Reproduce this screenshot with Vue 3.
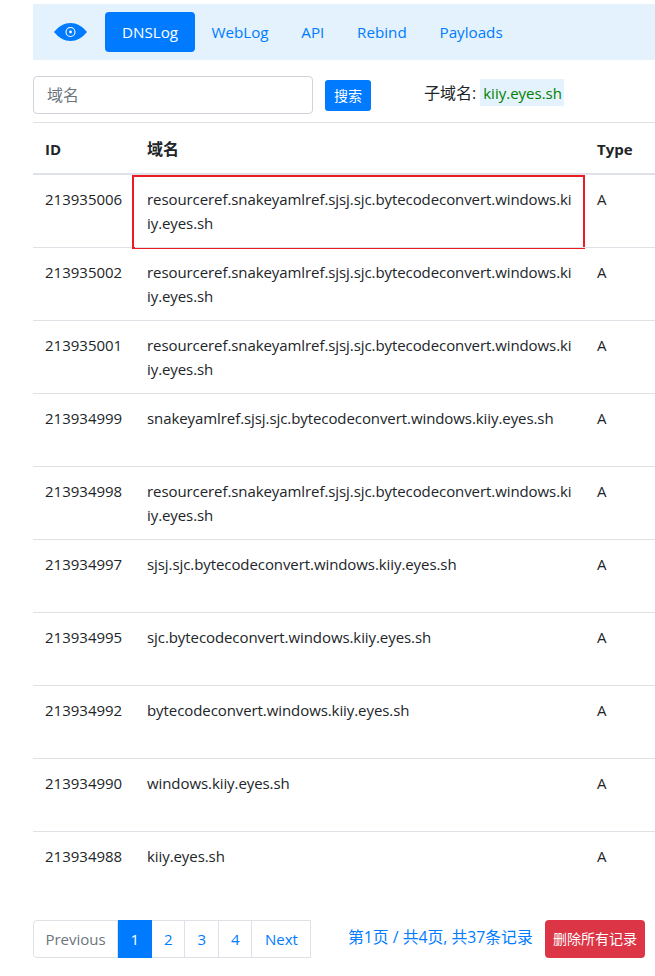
<script setup>
const navItems = ['WebLog', 'API', 'Rebind', 'Payloads']
const rows = [
  { id: 213935006, domain: 'resourceref.snakeyamlref.sjsj.sjc.bytecodeconvert.windows.kiiy.eyes.sh', marked: true },
  { id: 213935002, domain: 'resourceref.snakeyamlref.sjsj.sjc.bytecodeconvert.windows.kiiy.eyes.sh' },
  { id: 213935001, domain: 'resourceref.snakeyamlref.sjsj.sjc.bytecodeconvert.windows.kiiy.eyes.sh' },
  { id: 213934999, domain: 'snakeyamlref.sjsj.sjc.bytecodeconvert.windows.kiiy.eyes.sh' },
  { id: 213934998, domain: 'resourceref.snakeyamlref.sjsj.sjc.bytecodeconvert.windows.kiiy.eyes.sh' },
  { id: 213934997, domain: 'sjsj.sjc.bytecodeconvert.windows.kiiy.eyes.sh' },
  { id: 213934995, domain: 'sjc.bytecodeconvert.windows.kiiy.eyes.sh' },
  { id: 213934992, domain: 'bytecodeconvert.windows.kiiy.eyes.sh' },
  { id: 213934990, domain: 'windows.kiiy.eyes.sh' },
  { id: 213934988, domain: 'kiiy.eyes.sh' }
]
</script>

<template>
  <div class="page">
    <nav class="nav">
      <svg class="logo" viewBox="0 0 33 18" width="33" height="18" aria-hidden="true">
        <path fill="#007bff" d="M0 9C5 3 10.500 0 16.500 0S28 3 33 9C28 15 22.500 18 16.500 18S5 15 0 9Z"/>
        <circle cx="16.500" cy="9" r="4.500" fill="none" stroke="#fff" stroke-width="1.100"/>
        <circle cx="16.500" cy="9" r="1.400" fill="#fff"/>
      </svg>
      <a class="nav-link active">DNSLog</a>
      <a v-for="item in navItems" :key="item" class="nav-link">{{ item }}</a>
    </nav>

    <div class="search">
      <input class="input" type="text" placeholder="域名" />
      <button class="btn-search">搜索</button>
      <span class="label">子域名:</span>
      <code class="code">kiiy.eyes.sh</code>
    </div>

    <table class="table">
      <colgroup>
        <col class="c-id" />
        <col class="c-domain" />
        <col class="c-type" />
      </colgroup>
      <thead>
        <tr>
          <th>ID</th>
          <th class="cjk-head">域名</th>
          <th>Type</th>
        </tr>
      </thead>
      <tbody>
        <tr v-for="row in rows" :key="row.id">
          <td>{{ row.id }}</td>
          <td class="domain">
            {{ row.domain }}
            <span v-if="row.marked" class="mark"></span>
          </td>
          <td>A</td>
        </tr>
      </tbody>
    </table>

    <div class="footer">
      <ul class="pager">
        <li class="prev">Previous</li>
        <li class="on">1</li>
        <li>2</li>
        <li>3</li>
        <li>4</li>
        <li class="next">Next</li>
      </ul>
      <span class="info">第1页 / 共4页, 共37条记录</span>
      <button class="btn-del">删除所有记录</button>
    </div>
  </div>
</template>

<style>
html, body { margin: 0; background: #fff; }
</style>

<style scoped>
.page {
  width: 622px;
  height: 976px;
  box-sizing: border-box;
  margin-left: 33px;
  padding-top: 4px;
  overflow: hidden;
  color: #212529;
  font: 15px/24px "Open Sans", "Noto Sans CJK SC", sans-serif;
}
.nav {
  display: flex;
  align-items: center;
  height: 56px;
  padding-left: 21px;
  background: #e3f2fd;
}
.logo { margin-right: 18px; }
.nav-link {
  height: 40px;
  line-height: 40px;
  padding: 0 16.400px;
  font-size: 15.200px;
  color: #007bff;
  border-radius: 4px;
}
.nav-link.active {
  width: 90px;
  box-sizing: border-box;
  padding: 0;
  text-align: center;
  background: #007bff;
  color: #fff;
}
.search {
  display: flex;
  align-items: flex-start;
  margin-top: 16px;
  height: 46px;
}
.input {
  width: 280px;
  height: 38px;
  box-sizing: border-box;
  padding: 0 13px;
  border: 1px solid #ced4da;
  border-radius: 4px;
  font: 16px "Open Sans", "Noto Sans CJK SC", sans-serif;
  color: #495057;
}
.input::placeholder { color: #6c757d; opacity: 1; }
.btn-search {
  width: 46px;
  height: 31px;
  margin: 4px 0 0 12px;
  padding: 0 0 2px;
  border: 0;
  border-radius: 3px;
  background: #007bff;
  color: #fff;
  font: 14px "Noto Sans CJK SC", sans-serif;
}
.label {
  margin: 5px 0 0 53px;
  font-size: 16px;
}
.code {
  margin: 3px 0 0 4px;
  width: 84px;
  box-sizing: border-box;
  height: 27px;
  padding: 1px 3px 0;
  background: #e3f2fd;
  color: #008000;
  font: inherit;
  font-size: 15px;
  line-height: 26px;
  white-space: nowrap;
}
.table {
  width: 622px;
  table-layout: fixed;
  border-collapse: separate;
  border-spacing: 0;
}
.c-id { width: 102px; }
.c-domain { width: 450px; }
.c-type { width: 70px; }
thead tr { height: 53px; }
th {
  height: 53px;
  padding: 2px 12px 0;
  box-sizing: border-box;
  text-align: left;
  font-weight: 700;
  border-top: 1px solid #dee2e6;
  border-bottom: 2px solid #dee2e6;
  color: #212529;
}
.cjk-head { font-size: 16px; }
td {
  box-sizing: border-box;
  padding: 12px 12px 0;
  vertical-align: top;
  border-top: 1px solid #dee2e6;
}
tbody tr:first-child td { border-top: 0; height: 72px; }
tbody tr:not(:first-child) td { height: 73px; }
.domain {
  position: relative;
  word-break: break-all;
  letter-spacing: -0.080px;
}
.mark {
  position: absolute;
  left: -3px;
  top: 0;
  right: 0;
  bottom: -2px;
  border: 2px solid #ed1c24;
  pointer-events: none;
}
.footer {
  display: flex;
  align-items: flex-start;
  margin-top: 16px;
}
.pager {
  display: flex;
  margin: 0;
  padding: 0;
  list-style: none;
}
.pager li {
  height: 38px;
  box-sizing: border-box;
  width: 33.500px;
  padding-left: 1px;
  line-height: 36px;
  text-align: center;
  color: #007bff;
  background: #fff;
  border: 1px solid #dee2e6;
  border-left-width: 0;
}
.pager .prev {
  width: 85px;
  padding-left: 0;
  color: #6c757d;
  border-left-width: 1px;
  border-radius: 4px 0 0 4px;
}
.pager .on { background: #007bff; border-color: #007bff; color: #fff; }
.pager .next { width: 59px; }
.info {
  width: 197px;
  margin: 5px 0 0 37px;
  color: #007bff;
  font-size: 15.800px;
  white-space: nowrap;
}
.btn-del {
  width: 100px;
  height: 38px;
  padding: 0 0 3px;
  border: 0;
  border-radius: 4px;
  background: #dc3545;
  color: #fff;
  font: 14px "Noto Sans CJK SC", sans-serif;
}
</style>
